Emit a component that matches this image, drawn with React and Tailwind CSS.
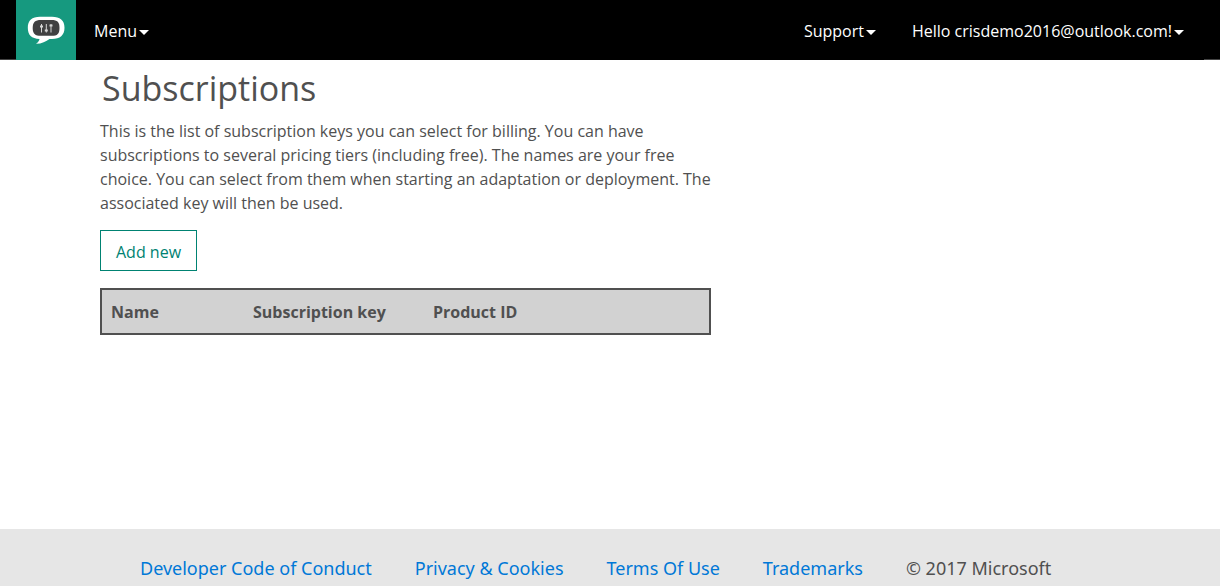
import React from "react";

function Caret() {
  return (
    <svg className="mt-0.5 h-[5px] w-2.5" viewBox="0 0 10 5" aria-hidden="true">
      <path d="M0 0h10L5 5z" fill="currentColor" />
    </svg>
  );
}

function NavButton({ children }) {
  return (
    <button type="button" className="flex items-center gap-0.5 whitespace-nowrap text-base">
      {children}
      <Caret />
    </button>
  );
}

function Logo() {
  return (
    <svg className="size-[60px]" viewBox="0 0 60 60" aria-hidden="true">
      <path
        d="M24 16.8h12c8 0 12.5 3.5 12.5 11S44 39 36 39h-2.500C30 41.5 25.5 43.9 20 43.8c2-1.300 3.300-3 3.500-4.800C15.500 38.700 11.800 35 11.800 27.800s4.200-11 12.200-11z"
        fill="#fff"
      />
      <path
        d="M25 20h10.500c6 0 8 2.300 8 7.900s-2 7.900-8 7.900H25c-6 0-8.300-2.300-8.300-7.900S19 20 25 20z"
        fill="#404041"
      />
      <g stroke="#d6d6d6" strokeWidth="1" fill="none">
        <path d="M25.5 24v8.500M30.300 24v8.500M35 24v8.500" />
        <path d="M24 26.500h3M28.800 30.500h3M33.500 25.500h3" strokeWidth="2" />
      </g>
    </svg>
  );
}

const footerLinks = ["Developer Code of Conduct", "Privacy & Cookies", "Terms Of Use", "Trademarks"];

export default function App() {
  return (
    <div className="flex min-h-screen flex-col bg-white font-['Open_Sans','Noto_Sans',sans-serif] text-[#505050]">
      <header className="flex h-[60px] bg-black text-white">
        <div className="w-4 border-b border-[#444]" />
        <a href="#home" aria-label="Home" className="bg-[#16997f]">
          <Logo />
        </a>
        <nav className="flex flex-1 items-center pt-0.5 pr-5 pl-[18px]">
          <NavButton>Menu</NavButton>
          <div className="ml-auto flex gap-9">
            <NavButton>Support</NavButton>
            <NavButton>Hello crisdemo2016@outlook.com!</NavButton>
          </div>
        </nav>
        <div className="w-4 border-b border-[#444]" />
      </header>

      <main className="flex-1 px-[100px] pb-8">
        <div className="max-w-[611px]">
          <h1 className="pt-1 pl-0.5 text-[34px] leading-[48px]">Subscriptions</h1>
          <p className="mt-[7px] text-base">
            This is the list of subscription keys you can select for billing. You can have subscriptions to
            several pricing tiers (including free). The names are your free choice. You can select from them
            when starting an adaptation or deployment. The associated key will then be used.
          </p>
          <button
            type="button"
            className="mt-[15px] block h-[41px] border border-[#008272] px-[15px] pt-0.5 text-base text-[#008272]"
          >
            Add new
          </button>
          <table className="mt-[17px] w-full table-fixed border-2 border-[#505050] bg-[#d2d2d2] text-left text-base">
            <thead>
              <tr className="h-[45px]">
                <th scope="col" className="w-[143px] px-[9px]">Name</th>
                <th scope="col" className="w-[180px] px-[9px]">Subscription key</th>
                <th scope="col" className="px-[9px]">Product ID</th>
              </tr>
            </thead>
          </table>
        </div>
      </main>

      <footer className="flex h-[57px] items-end gap-[43px] bg-[#e6e6e6] px-[140px] pb-1 font-['Noto_Sans',sans-serif] text-[18px] leading-7 whitespace-nowrap">
        {footerLinks.map((label) => (
          <a key={label} href="#legal" className="text-[#0078d7]">
            {label}
          </a>
        ))}
        <span>© 2017 Microsoft</span>
      </footer>
    </div>
  );
}
